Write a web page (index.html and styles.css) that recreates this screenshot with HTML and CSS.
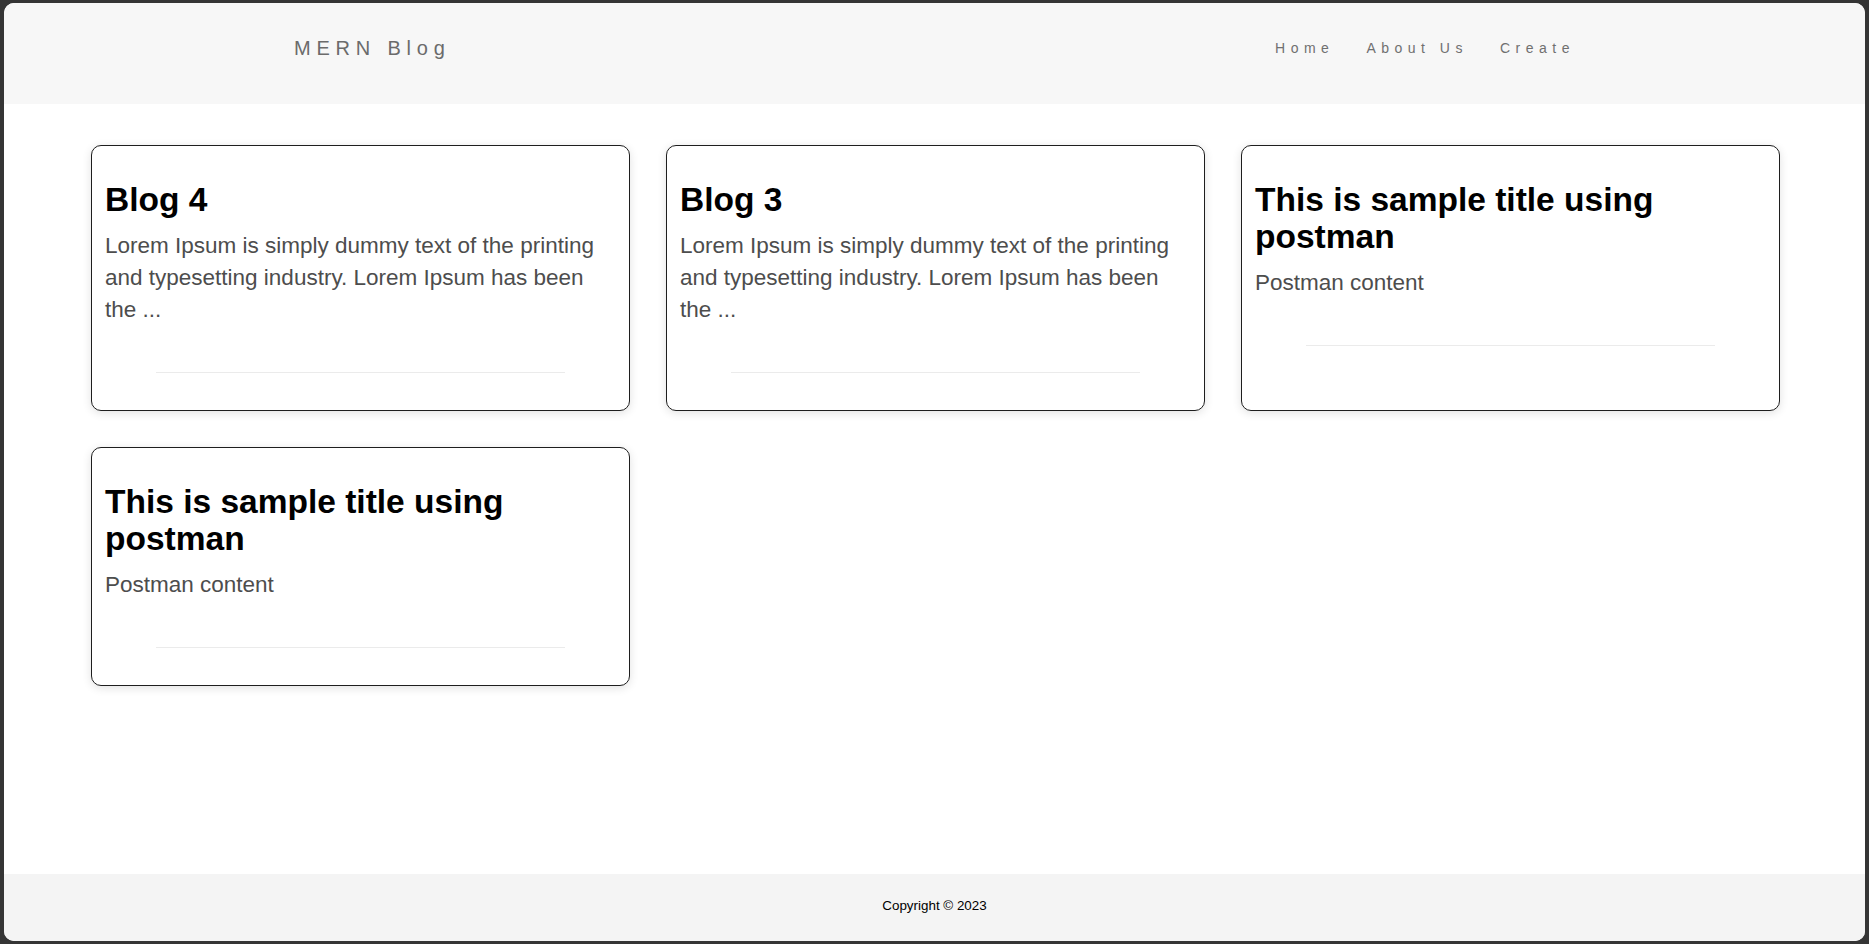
FILE: index.html
```html
<!DOCTYPE html>
<html lang="en">
<head>
<meta charset="utf-8">
<title>MERN Blog</title>
<link rel="stylesheet" href="styles.css">
</head>
<body>
<div class="app">
  <header class="header">
    <div class="header-inner">
      <div class="brand">MERN Blog</div>
      <nav class="nav">
        <a class="nav-link" href="#">Home</a>
        <a class="nav-link" href="#">About Us</a>
        <a class="nav-link" href="#">Create</a>
      </nav>
    </div>
  </header>
  <main class="main">
    <div class="grid">
      <article class="card">
        <h2 class="card-title">Blog 4</h2>
        <p class="card-text">Lorem Ipsum is simply dummy text of the printing and typesetting industry. Lorem Ipsum has been the ...</p>
        <div class="card-rule"></div>
      </article>
      <article class="card">
        <h2 class="card-title">Blog 3</h2>
        <p class="card-text">Lorem Ipsum is simply dummy text of the printing and typesetting industry. Lorem Ipsum has been the ...</p>
        <div class="card-rule"></div>
      </article>
      <article class="card">
        <h2 class="card-title">This is sample title using postman</h2>
        <p class="card-text">Postman content</p>
        <div class="card-rule"></div>
      </article>
      <article class="card">
        <h2 class="card-title">This is sample title using postman</h2>
        <p class="card-text">Postman content</p>
        <div class="card-rule"></div>
      </article>
    </div>
  </main>
  <footer class="footer">Copyright © 2023</footer>
</div>
</body>
</html>
```

FILE: styles.css
```css
* { box-sizing: border-box; }
html, body { height: 100%; }
body {
  margin: 0;
  background: #353535;
  font-family: "Liberation Sans", Arial, sans-serif;
  padding: 3px 4px 3px 4px;
}
.app {
  height: 938px;
  background: #ffffff;
  border-radius: 10px;
  overflow: hidden;
  display: flex;
  flex-direction: column;
}
.header {
  background: #f7f7f7;
  height: 101px;
  flex: none;
}
.header-inner {
  max-width: 1281px;
  margin: 0 auto;
  padding-top: 33px;
  display: flex;
  justify-content: space-between;
  align-items: center;
}
.brand {
  font-size: 20px;
  line-height: 24px;
  letter-spacing: 5.8px;
  color: #6b6b6b;
}
.nav {
  display: flex;
  gap: 32px;
}
.nav-link {
  font-size: 14px;
  line-height: 16px;
  letter-spacing: 5.5px;
  color: #707070;
  text-decoration: none;
}
.main {
  flex: 1;
  padding: 41px 0 0 87px;
}
.grid {
  display: grid;
  grid-template-columns: repeat(3, 539px);
  column-gap: 36px;
  row-gap: 36px;
}
.card {
  border: 1px solid #1e1e1e;
  border-radius: 10px;
  padding: 13px;
  background: #fff;
  box-shadow: 0 2px 10px rgba(0, 0, 0, 0.12);
  display: flex;
  flex-direction: column;
}
.card-title {
  margin: 22px 0 0;
  font-size: 33.5px;
  line-height: 37px;
  font-weight: bold;
  color: #000;
}
.card-text {
  margin: 12px 0 0;
  font-size: 22.5px;
  line-height: 32px;
  color: #4d4d4d;
}
.card-rule {
  margin: 46px auto 24px;
  width: 80%;
  border-top: 1px solid #ebebeb;
}
.footer {
  flex: none;
  height: 67px;
  background: #f4f4f4;
  display: flex;
  align-items: center;
  justify-content: center;
  font-size: 13.4px;
  color: #000;
  padding-bottom: 5px;
}
```
